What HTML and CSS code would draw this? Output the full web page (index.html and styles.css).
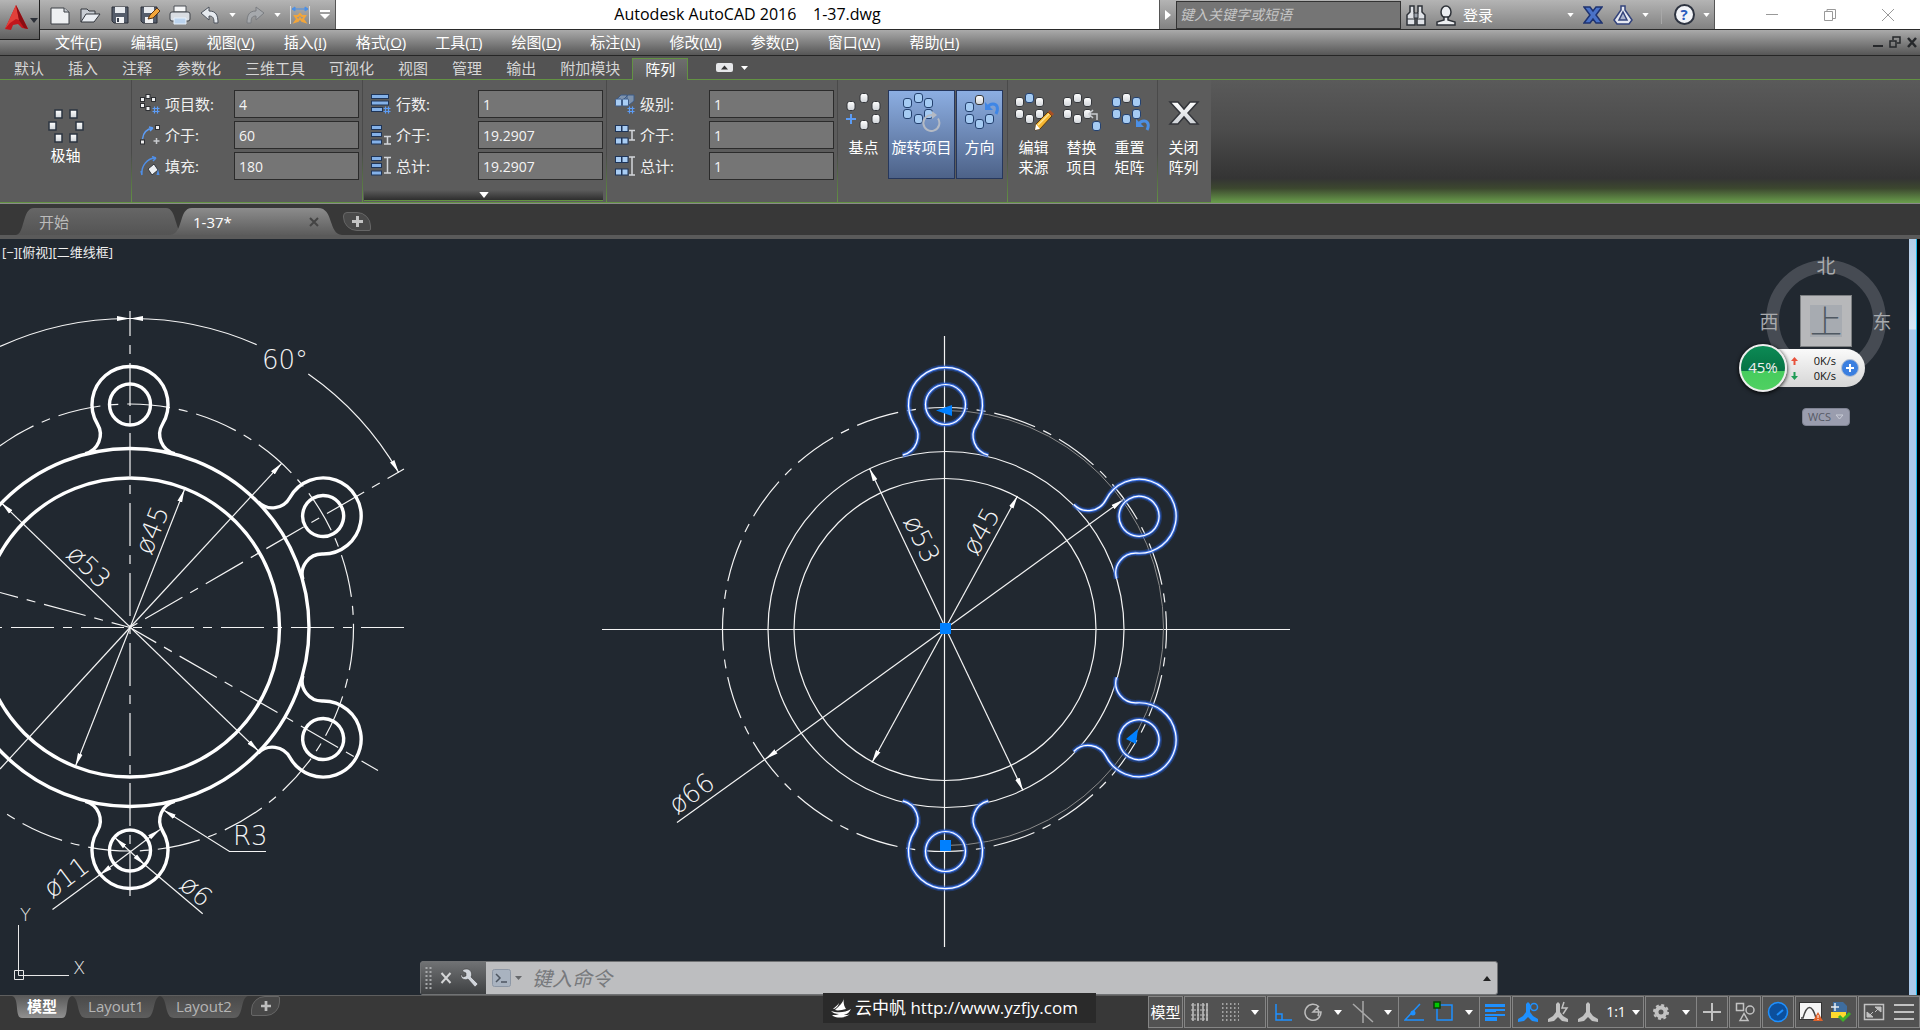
FILE: index.html
```html
<!DOCTYPE html>
<html lang="zh-CN">
  <head>
    <meta charset="UTF-8" />
    <meta name="viewport" content="width=device-width, initial-scale=1.0" />
    <title>Autodesk AutoCAD 2016 1-37.dwg</title>
    <link rel="stylesheet" href="styles.css">
  </head>

  <body>
    <svg class="defs" aria-hidden="true">
      <defs>
        <linearGradient id="white-fill" x1="0" y1="0" x2="0" y2="1">
          <stop offset="0" stop-color="#ffffff" />
          <stop offset="1" stop-color="#cfd3d8" />
        </linearGradient>
        <marker id="arrow" viewBox="0 0 13 6" refX="13" refY="3" markerWidth="13" markerHeight="6" markerUnits="userSpaceOnUse" orient="auto-start-reverse">
          <path d="M0 0.5L13 3L0 5.5z" fill="#fff" />
        </marker>
        <symbol id="i-down" viewBox="0 0 8 5"><path d="M0 0h8L4 5z" fill="currentColor" /></symbol>
        <symbol id="w" viewBox="0 0 9 10" overflow="visible"><rect x="0.5" y="0.5" width="8" height="9" rx="2.5" fill="url(#white-fill)" stroke="#35373b" /></symbol>
        <symbol id="b" viewBox="0 0 9 10" overflow="visible"><rect x="0.5" y="0.5" width="8" height="9" rx="2.5" fill="#a5cbf3" stroke="#24416f" /></symbol>
        <symbol id="i-hash" viewBox="0 0 8 8"><path d="M2.5 0.5v7M5.5 0.5v7M0.5 2.5h7M0.5 5.5h7" stroke="#5c9cf5" stroke-width="1.2" /></symbol>
        <symbol id="person" viewBox="0 0 22 22">
          <path d="M11 1l2 2v8l3 4 5 3v3l-6-1-4-4-4 4-6 1v-3l5-3 3-4V3z" fill="currentColor" />
        </symbol>
        <!-- 凸耳 -->
        <path id="lug-left" d="M-44.700 -173.800A20 20 0 0 0 -32.600 -203.500A38 38 0 1 1 32.600 -203.500A20 20 0 0 0 44.700 -173.800" />
        <path id="lug-right" d="M-42.800 -172.800A20 20 0 0 0 -30.900 -203.200A37 37 0 1 1 30.900 -203.200A20 20 0 0 0 42.800 -172.800M-20 -223.500A20 20 0 1 1 20 -223.500A20 20 0 1 1 -20 -223.500" />
        <g id="lugs-right">
          <use href="#lug-right" />
          <use href="#lug-right" transform="rotate(60)" />
          <use href="#lug-right" transform="rotate(120)" />
          <use href="#lug-right" transform="rotate(180)" />
        </g>
      </defs>
    </svg>

    <!-- 标题栏 -->
    <header class="titlebar">
      <button class="app-button" aria-label="应用程序菜单">
        <svg width="38" height="38" viewBox="0 0 38 38">
          <path d="M15 4L27 28l-6-1-4-4-5 1-2 5-6-1z" fill="#c3161c" />
          <path d="M15 4l3 15-3-1-6 4-5 6z" fill="#e2403a" />
          <path d="M18 19l5 8 4 1-12-24z" fill="#8c0d12" />
          <path d="M29 17h8l-4 5z" fill="#2c3038" />
        </svg>
      </button>
      <div class="quick-access">
        <button aria-label="新建"><svg width="22" height="22" viewBox="0 0 22 22"><path d="M2 4h13l5 4v12H2z" fill="#eef0f2" stroke="#3b3f45" /><path d="M15 4v4h5" fill="#c6cad0" stroke="#3b3f45" /></svg></button>
        <button aria-label="打开"><svg width="22" height="22" viewBox="0 0 22 22"><path d="M2 18V5h6l2 2h6v4" fill="#c8cdd4" stroke="#32363d" /><path d="M2 18l5-8h14l-6 8z" fill="#e9edf2" stroke="#32363d" /></svg></button>
        <button aria-label="保存"><svg width="20" height="20" viewBox="0 0 20 20"><path d="M2 2h16v16H4l-2-2z" fill="#555d6b" stroke="#2b2f38" /><path d="M5 2h10v6H5z" fill="#e7eaee" /><path d="M6 12h8v6H6z" fill="#f3f4f6" /><path d="M7 13h2v4H7z" fill="#39404d" /></svg></button>
        <button aria-label="另存为"><svg width="22" height="20" viewBox="0 0 22 20"><path d="M2 2h16v16H4l-2-2z" fill="#555d6b" stroke="#2b2f38" /><path d="M5 2h10v6H5z" fill="#e7eaee" /><path d="M6 12h8v6H6z" fill="#f3f4f6" /><path d="M9 14l2-4 7-7 3 3-7 7z" fill="#f2a53a" stroke="#5a3414" /></svg></button>
        <button aria-label="打印"><svg width="22" height="20" viewBox="0 0 22 20"><path d="M5 1h12v6H5z" fill="#f6f7f8" stroke="#4a4e55" /><rect x="1" y="7" width="20" height="9" rx="2" fill="#d9dde2" stroke="#3e4249" /><path d="M5 13h12v6H5z" fill="#bcd4ee" stroke="#e8f1fa" /></svg></button>
        <button aria-label="放弃"><svg width="22" height="20" viewBox="0 0 22 20"><path d="M2 8l8-6v4c7 0 9 4 9 12h-4c0-5-1-7-5-7v4z" fill="#e6eaef" stroke="#4d535c" /></svg></button>
        <button class="narrow" aria-label="放弃列表"><svg width="7" height="4"><use href="#i-down" /></svg></button>
        <button aria-label="重做"><svg width="22" height="20" viewBox="0 0 22 20"><path d="M20 8l-8-6v4c-7 0-9 4-9 12h4c0-5 1-7 5-7v4z" fill="#a6a9ad" stroke="#7a7d81" /></svg></button>
        <button class="narrow" aria-label="重做列表"><svg width="7" height="4"><use href="#i-down" /></svg></button>
        <button aria-label="自定义工具"><svg width="22" height="20" viewBox="0 0 22 20"><path d="M1.500 1v18M20.500 1v18" stroke="#d8dadd" /><path d="M3 4h16M3 4l3-2v4zM19 4l-3-2v4z" stroke="#4b8fe6" fill="#4b8fe6" /><path d="M6 17l2-3-2-3 3 0 2-2 2 2 3 0-2 3 2 3-3-1-2-3-2 3z" fill="none" stroke="#f2a53a" stroke-width="2" /></svg></button>
        <button class="narrow" aria-label="自定义快速访问工具栏"><svg width="10" height="10" viewBox="0 0 10 10"><path d="M0 0h10v2H0zM0 4h10L5 9z" fill="#fff" /></svg></button>
      </div>
      <h1 class="title">Autodesk AutoCAD 2016 &nbsp;&nbsp; 1-37.dwg</h1>
      <div class="infocenter">
        <button class="play" aria-label="折叠"><svg width="6" height="10" viewBox="0 0 6 10"><path d="M0 0l6 5-6 5z" fill="#fff" /></svg></button>
        <input class="search" type="text" placeholder="键入关键字或短语" aria-label="键入关键字或短语" />
        <button aria-label="搜索"><svg width="22" height="22" viewBox="0 0 22 22"><path d="M5 2h4v6l1 3v10H2V11l3-3zM17 2h-4v6l-1 3v10h8V11l-3-3z" fill="#dfe2e7" stroke="#2e3238" stroke-width="1.500" /><path d="M9 9h4v5H9zM2 15h8M12 15h8" fill="#9aa1ab" stroke="#2e3238" /></svg></button>
        <button aria-label="用户"><svg width="22" height="22" viewBox="0 0 22 22"><ellipse cx="11" cy="8" rx="5" ry="6" fill="#eceef1" stroke="#2e3238" stroke-width="1.500" /><path d="M9 13h4v3l7 2v3H2v-3l7-2z" fill="#eceef1" stroke="#2e3238" stroke-width="1.500" /></svg></button>
        <button class="sign-in">登录</button>
        <button class="narrow" aria-label="登录列表"><svg width="7" height="4"><use href="#i-down" /></svg></button>
        <button aria-label="Exchange 应用程序"><svg width="20" height="18" viewBox="0 0 20 18"><path d="M1 1h6l3 4 3-4h6l-6 8 6 8h-6l-3-4-3 4H1l6-8z" fill="#4a72c8" stroke="#1f3370" stroke-width="1.500" /></svg></button>
        <button aria-label="A360"><svg width="22" height="22" viewBox="0 0 22 22"><path d="M9 2h4v4l7 10-3 4H5l-3-4 7-10z" fill="#e6e9f2" stroke="#34447c" stroke-width="1.500" /><path d="M11 8l4 8H7z" fill="#a9b2cc" stroke="#34447c" stroke-width="1.500" /></svg></button>
        <button class="narrow" aria-label="A360 列表"><svg width="7" height="4"><use href="#i-down" /></svg></button>
        <span class="divider"></span>
        <button class="help" aria-label="帮助"><span class="help-mark">?</span></button>
        <button class="narrow" aria-label="帮助列表"><svg width="7" height="4"><use href="#i-down" /></svg></button>
      </div>
      <div class="window-buttons">
        <button aria-label="最小化"><svg width="14" height="14" viewBox="0 0 14 14"><path d="M1 6.500h12" stroke="#999" /></svg></button>
        <button aria-label="还原"><svg width="14" height="14" viewBox="0 0 14 14"><path d="M1.500 3.500h8v9h-8zM4 3V1.500h8.500v9H10" fill="none" stroke="#999" /></svg></button>
        <button aria-label="关闭"><svg width="14" height="14" viewBox="0 0 14 14"><path d="M1 1l12 12M13 1L1 13" stroke="#999" /></svg></button>
      </div>
    </header>

    <!-- 菜单栏 -->
    <nav class="menubar">
      <a href="#">文件(<u>F</u>)</a>
      <a href="#">编辑(<u>E</u>)</a>
      <a href="#">视图(<u>V</u>)</a>
      <a href="#">插入(<u>I</u>)</a>
      <a href="#">格式(<u>O</u>)</a>
      <a href="#">工具(<u>T</u>)</a>
      <a href="#">绘图(<u>D</u>)</a>
      <a href="#">标注(<u>N</u>)</a>
      <a href="#">修改(<u>M</u>)</a>
      <a href="#">参数(<u>P</u>)</a>
      <a href="#">窗口(<u>W</u>)</a>
      <a href="#">帮助(<u>H</u>)</a>
      <div class="doc-buttons">
        <button aria-label="最小化图形"><svg width="12" height="12" viewBox="0 0 12 12"><path d="M1 9h10v2H1z" fill="#26282b" /></svg></button>
        <button aria-label="还原图形"><svg width="12" height="12" viewBox="0 0 12 12"><path d="M1 5h6v6H1zM4 4V1h7v6H8" fill="none" stroke="#26282b" stroke-width="1.500" /></svg></button>
        <button aria-label="关闭图形"><svg width="12" height="12" viewBox="0 0 12 12"><path d="M2 2l8 9M10 2l-8 9" stroke="#26282b" stroke-width="2.500" /></svg></button>
      </div>
    </nav>

    <!-- 功能区选项卡 -->
    <nav class="ribbon-tabs">
      <a href="#">默认</a>
      <a href="#">插入</a>
      <a href="#">注释</a>
      <a href="#">参数化</a>
      <a href="#">三维工具</a>
      <a href="#">可视化</a>
      <a href="#">视图</a>
      <a href="#">管理</a>
      <a href="#">输出</a>
      <a href="#">附加模块</a>
      <a class="active" href="#">阵列</a>
      <button class="ribbon-toggle" aria-label="最小化功能区">
        <svg width="32" height="10" viewBox="0 0 32 10"><rect width="17" height="9" rx="2" fill="#e6e7e9" /><path d="M5 6.500h7L8.500 2.500z" fill="#333" /><path d="M25 3h7l-3.500 4z" fill="#fff" /></svg>
      </button>
    </nav>

    <!-- 功能区面板 -->
    <section class="ribbon">
      <div class="panel panel-type">
        <button class="polar">
          <svg width="38" height="36" viewBox="0 0 38 36">
            <g fill="url(#white-fill)" stroke="#2b3440" stroke-width="1.500">
              <rect x="8" y="2" width="7" height="8" /><rect x="23" y="2" width="7" height="8" />
              <rect x="2" y="14" width="7" height="8" /><rect x="29" y="14" width="7" height="8" />
              <rect x="8" y="26" width="7" height="8" /><rect x="23" y="26" width="7" height="8" />
            </g>
          </svg>
          极轴
        </button>
      </div>

      <div class="panel panel-form">
        <div class="form-row">
          <svg width="20" height="20" viewBox="0 0 20 20"><g fill="#eef0f2" stroke="#2d2f33"><rect x="6" y="0.500" width="4" height="4" /><rect x="0.500" y="3.500" width="4" height="4" /><rect x="11.500" y="3.500" width="4" height="4" /><rect x="0.500" y="9.500" width="4" height="4" /><rect x="6" y="12.500" width="4" height="4" /></g><use href="#i-hash" x="12" y="12" width="8" height="8" /></svg>
          <label for="items">项目数:</label>
          <input id="items" type="text" value="4" />
        </div>
        <div class="form-row">
          <svg width="20" height="20" viewBox="0 0 20 20"><path d="M2.500 14C3 8 7 4 13 3M13 3l-4-1M13 3l-3 3" fill="none" stroke="#5c9cf5" stroke-width="1.500" /><rect x="15.500" y="0.500" width="4" height="4" fill="#eee" stroke="#2d2f33" /><rect x="0.500" y="15" width="4" height="4" fill="#eee" stroke="#2d2f33" /><path d="M16.500 13v6M13.500 16h6" stroke="#c9ccd0" stroke-width="1.500" /></svg>
          <label for="items-between">介于:</label>
          <input id="items-between" type="text" value="60" />
        </div>
        <div class="form-row">
          <svg width="20" height="20" viewBox="0 0 20 20"><path d="M2 19C1 10 7 2 16 2M16 2l-4-1.500M16 2l-3 3M2 19l-1-4" fill="none" stroke="#4f8fe8" stroke-width="1.500" /><path d="M8 13l6-5 4 6-6 5z" fill="#edeff2" stroke="#33373d" /><path d="M18 13l1.500 6h-3z" fill="#4f8fe8" /></svg>
          <label for="fill">填充:</label>
          <input id="fill" type="text" value="180" />
        </div>
      </div>

      <div class="panel panel-form panel-rows">
        <div class="form-row">
          <svg width="20" height="20" viewBox="0 0 20 20"><g fill="#84b1e8" stroke="#1f3558"><rect x="0.500" y="0.500" width="17" height="4" /><rect x="0.500" y="7" width="17" height="4" /><rect x="0.500" y="13.500" width="11" height="4" /></g><use href="#i-hash" x="12" y="12" width="8" height="8" /></svg>
          <label for="rows">行数:</label>
          <input id="rows" type="text" value="1" />
        </div>
        <div class="form-row">
          <svg width="20" height="20" viewBox="0 0 20 20"><g fill="#84b1e8" stroke="#1f3558"><rect x="0.500" y="0.500" width="10" height="4" /><rect x="0.500" y="7.500" width="10" height="4" /><rect x="0.500" y="15" width="10" height="4" /></g><path d="M13 11.500h7M13 19h7M16.500 11v8" stroke="#d3d6da" stroke-width="1.500" /></svg>
          <label for="rows-between">介于:</label>
          <input id="rows-between" type="text" value="19.2907" />
        </div>
        <div class="form-row">
          <svg width="20" height="20" viewBox="0 0 20 20"><g fill="#84b1e8" stroke="#1f3558"><rect x="0.500" y="0.500" width="10" height="4" /><rect x="0.500" y="7.500" width="10" height="4" /><rect x="0.500" y="15" width="10" height="4" /></g><path d="M13 1.500h7M13 17h7M16.500 1v16" stroke="#d3d6da" stroke-width="1.500" /></svg>
          <label for="rows-total">总计:</label>
          <input id="rows-total" type="text" value="19.2907" />
        </div>
        <button class="panel-expand" aria-label="展开面板"><svg width="10" height="6" viewBox="0 0 8 5"><use href="#i-down" /></svg></button>
      </div>

      <div class="panel panel-form">
        <div class="form-row">
          <svg width="20" height="20" viewBox="0 0 20 20"><g fill="#a9cdf4" stroke="#3d5a85"><path d="M1 6l5-5h6v6l-5 4M8 6l5-5h6v6l-5 4" fill="#7d92ad" /><rect x="0.500" y="5" width="6" height="7" rx="1" /><rect x="7.500" y="5" width="6" height="7" rx="1" /></g><use href="#i-hash" x="12" y="12" width="8" height="8" /></svg>
          <label for="levels">级别:</label>
          <input id="levels" type="text" value="1" />
        </div>
        <div class="form-row">
          <svg width="20" height="20" viewBox="0 0 20 20"><g fill="#a9cdf4" stroke="#1f3558"><rect x="0.500" y="0.500" width="6" height="6" /><rect x="7" y="0.500" width="6" height="6" /><rect x="0.500" y="13" width="6" height="6" /><rect x="7" y="13" width="6" height="6" /></g><path d="M14 5.500h6M14 15h6M17 5v10" stroke="#d3d6da" stroke-width="1.500" /></svg>
          <label for="levels-between">介于:</label>
          <input id="levels-between" type="text" value="1" />
        </div>
        <div class="form-row">
          <svg width="20" height="20" viewBox="0 0 20 20"><g fill="#a9cdf4" stroke="#1f3558"><rect x="0.500" y="0.500" width="6" height="6" /><rect x="7" y="0.500" width="6" height="6" /><rect x="0.500" y="13" width="6" height="6" /><rect x="7" y="13" width="6" height="6" /></g><path d="M14 1h6M14 19h6M17 1v18" stroke="#d3d6da" stroke-width="1.500" /></svg>
          <label for="levels-total">总计:</label>
          <input id="levels-total" type="text" value="1" />
        </div>
      </div>

      <div class="panel panel-buttons">
        <button class="tool">
          <svg width="40" height="40" viewBox="0 0 40 40">
            <g><use href="#w" x="15" y="1" width="10" height="10" /><use href="#w" x="27" y="9" width="10" height="10" /><use href="#w" x="27" y="22" width="10" height="10" /><use href="#w" x="15" y="28" width="10" height="10" /><use href="#w" x="2" y="9" width="10" height="10" /></g>
            <path d="M7 22v10M2 27h10" stroke="#5c9cf5" stroke-width="2" />
          </svg>
          <span>基点</span>
        </button>
        <button class="tool wide pressed">
          <svg width="40" height="40" viewBox="0 0 40 40">
            <g><use href="#b" x="12" y="1" width="9" height="10" /><use href="#b" x="22" y="6" width="9" height="10" /><use href="#b" x="22" y="17" width="9" height="10" /><use href="#b" x="12" y="22" width="9" height="10" /><use href="#b" x="1" y="17" width="9" height="10" /><use href="#b" x="1" y="6" width="9" height="10" /></g>
            <path d="M36 26.500a8 8 0 1 1-6-3.500" fill="none" stroke="#b4bac4" stroke-width="2" /><path d="M30 19l5 4-5 4z" fill="#b4bac4" />
          </svg>
          <span>旋转项目</span>
        </button>
        <button class="tool pressed">
          <svg width="40" height="40" viewBox="0 0 40 40">
            <g><use href="#w" x="15" y="3" width="9" height="10" /><use href="#b" x="5" y="10" width="9" height="10" /><use href="#b" x="5" y="22" width="9" height="10" /><use href="#b" x="15" y="27" width="9" height="10" /><use href="#b" x="25" y="22" width="9" height="10" /></g>
            <path d="M36 22c3-6 1-10-3-10-2 0-4 1-5 3" fill="none" stroke="#3f86e6" stroke-width="3" /><path d="M25 10v8h8z" fill="#3f86e6" />
          </svg>
          <span>方向</span>
        </button>
      </div>

      <div class="panel panel-buttons panel-edit">
        <button class="tool">
          <svg width="40" height="40" viewBox="0 0 40 40">
            <g><use href="#b" x="11" y="1" width="9" height="10" /><use href="#w" x="21" y="5" width="9" height="10" /><use href="#w" x="21" y="17" width="9" height="10" /><use href="#w" x="11" y="22" width="9" height="10" /><use href="#w" x="1" y="17" width="9" height="10" /><use href="#w" x="1" y="5" width="9" height="10" /></g>
            <path d="M21 38l1-6 12-12 4 4-12 13z" fill="#f7b731" stroke="#5a3a10" /><path d="M34 20l2-2 4 4-2 2z" fill="#a84f24" /><path d="M21 38l1-6 4 5z" fill="#fff" /><path d="M24 33l11-11" stroke="#ffe695" stroke-width="1.500" />
          </svg>
          <span>编辑<br />来源</span>
        </button>
        <button class="tool">
          <svg width="40" height="40" viewBox="0 0 40 40">
            <g><use href="#w" x="11" y="1" width="9" height="10" /><use href="#w" x="21" y="5" width="9" height="10" /><use href="#w" x="21" y="17" width="9" height="10" /><use href="#w" x="11" y="22" width="9" height="10" /><use href="#w" x="1" y="17" width="9" height="10" /><use href="#w" x="1" y="5" width="9" height="10" /><use href="#b" x="30" y="29" width="9" height="10" /></g>
            <path d="M35 28v-6h-7M31 18l-4 4 4 4" fill="none" stroke="#c9ccd0" stroke-width="1.500" />
          </svg>
          <span>替换<br />项目</span>
        </button>
        <button class="tool">
          <svg width="40" height="40" viewBox="0 0 40 40">
            <g><use href="#w" x="12" y="1" width="9" height="10" /><use href="#b" x="22" y="5" width="9" height="10" /><use href="#b" x="22" y="17" width="9" height="10" /><use href="#b" x="12" y="22" width="9" height="10" /><use href="#b" x="2" y="17" width="9" height="10" /><use href="#b" x="2" y="5" width="9" height="10" /></g>
            <path d="M37 38c3-6 0-9-3-9-2 0-4 1-5 3" fill="none" stroke="#4b8fe6" stroke-width="3" /><path d="M26 27v8h8z" fill="#4b8fe6" />
          </svg>
          <span>重置<br />矩阵</span>
        </button>
      </div>

      <div class="panel panel-buttons panel-close">
        <button class="tool">
          <svg width="40" height="40" viewBox="0 0 40 40"><path d="M6 10h8l6 7 6-7h8L24 21l10 11h-8l-6-7-6 7H6l10-11z" fill="url(#white-fill)" stroke="#33353a" stroke-width="1.500" /></svg>
          <span>关闭<br />阵列</span>
        </button>
      </div>
    </section>

    <!-- 文件选项卡 -->
    <nav class="file-tabs">
      <a class="file-tab start" href="#">开始</a>
      <a class="file-tab current" href="#">1-37*
        <svg width="10" height="10" viewBox="0 0 10 10"><path d="M1 1l8 8M9 1L1 9" stroke="#444" stroke-width="2" /></svg>
      </a>
      <button class="new-tab" aria-label="新图形"><svg width="11" height="11" viewBox="0 0 11 11"><path d="M4 0h3v4h4v3H7v4H4V7H0V4h4z" fill="#c4c4c4" /></svg></button>
    </nav>

    <!-- 绘图区 -->
    <main class="workspace">
      <svg class="drawing" viewBox="0 239 1909 756" preserveAspectRatio="xMinYMin meet">
        <!-- 左侧参考图 -->
        <g class="thin">
          <path class="center-line" d="M404 627.500H0" />
          <path class="center-line" d="M130 311V898" stroke-dashoffset="18" />
          <path class="center-line" d="M404 469L130 627.500M378 770.500L130 627.500M130 627.500L0 592.500" stroke-dashoffset="24" />
          <circle class="center-line" cx="130" cy="627.500" r="223.500" />
          <path d="M0 346.500A309 309 0 0 1 130 318.500" marker-end="url(#arrow)" />
          <path d="M130 318.500A309 309 0 0 1 256.700 344.700" marker-start="url(#arrow)" />
          <path d="M308.300 374A309 309 0 0 1 398.700 472.500" marker-end="url(#arrow)" />
          <path d="M130 627.500L281.700 463.300" marker-end="url(#arrow)" />
          <path d="M130 627.500L0 769" />
          <path d="M1.500 503L258.500 751" marker-start="url(#arrow)" marker-end="url(#arrow)" />
          <path d="M184.500 489.500L75.500 766" marker-start="url(#arrow)" marker-end="url(#arrow)" />
          <path d="M160 829.500L99.500 875" marker-start="url(#arrow)" marker-end="url(#arrow)" />
          <path d="M99.500 875L52.500 909.500" />
          <path d="M115 837.700L145 865" marker-start="url(#arrow)" marker-end="url(#arrow)" />
          <path d="M145 865L202.700 913.700" />
          <path d="M163.500 810L229.500 851.500H266" marker-start="url(#arrow)" />
        </g>
        <g class="thick" transform="translate(130 627.500)">
          <circle r="149.500" />
          <circle r="179" />
          <g><use href="#lug-left" /><circle cy="-223" r="20.500" /></g>
          <g transform="rotate(60)"><use href="#lug-left" /><circle cy="-223" r="20.500" /></g>
          <g transform="rotate(120)"><use href="#lug-left" /><circle cy="-223" r="20.500" /></g>
          <g transform="rotate(180)"><use href="#lug-left" /><circle cy="-223" r="20.500" /></g>
        </g>
        <g class="dim-text">
          <text x="262" y="369">60°</text>
          <text transform="translate(65 556) rotate(44)">ø53</text>
          <text transform="translate(151 556) rotate(-68)">ø45</text>
          <text transform="translate(52 899) rotate(-37)">ø11</text>
          <text transform="translate(178 887) rotate(41)">ø6</text>
          <text x="233" y="845">R3</text>
        </g>
        <!-- 坐标系图标 -->
        <g class="ucs">
          <path d="M14.500 970.500h9v9h-9zM18.500 975.500V925M18.500 975.500H69" />
          <text x="20" y="921">Y</text>
          <text x="73" y="974">X</text>
        </g>
        <!-- 右侧图形 -->
        <g class="thin">
          <path d="M602 629.500H1290M944.500 336V947" />
          <circle cx="945" cy="629.500" r="151" />
          <circle cx="946" cy="629.500" r="178" />
          <circle class="center-line" cx="944.500" cy="629.500" r="222" stroke-dashoffset="24" />
          <path d="M869.500 468.500L1023 790.500" marker-start="url(#arrow)" marker-end="url(#arrow)" />
          <path d="M1017.500 496L872 762.500" marker-start="url(#arrow)" marker-end="url(#arrow)" />
          <path d="M1123.500 499.500L765.500 759" marker-start="url(#arrow)" marker-end="url(#arrow)" />
          <path d="M765.500 759L677 822.500" />
        </g>
        <path class="array-path" d="M946 410.500A217.500 217.500 0 0 1 946 845.500" />
        <g transform="translate(945.500 628)">
          <use class="glow-outer" href="#lugs-right" />
          <use class="glow" href="#lugs-right" />
          <use class="selected" href="#lugs-right" />
        </g>
        <g class="dim-text">
          <text transform="translate(903 521) rotate(64)">ø53</text>
          <text transform="translate(977 557) rotate(-61)">ø45</text>
          <text transform="translate(677 815) rotate(-36)">ø66</text>
        </g>
        <g class="grip">
          <rect x="940" y="623" width="11" height="11" />
          <rect x="940" y="840" width="11" height="11" />
          <path d="M936 410.500L952 405v11zM1126 739l12-10-2 15z" />
        </g>
      </svg>

      <p class="view-label">[−][俯视][二维线框]</p>

      <!-- ViewCube -->
      <svg class="view-cube" width="140" height="130" viewBox="1756 250 140 130">
        <circle cx="1826" cy="320" r="53.500" fill="none" stroke="#464b53" stroke-width="13" />
        <rect x="1800.500" y="295.500" width="51" height="51" fill="#b7b8ba" stroke="#7d8082" />
        <rect x="1810" y="305" width="32" height="32" fill="#a7abb1" />
        <g class="cube-text">
          <text x="1826" y="273">北</text>
          <text x="1769" y="329">西</text>
          <text x="1882" y="329">东</text>
          <text class="cube-face" x="1826" y="333">上</text>
        </g>
      </svg>

      <div class="net-widget">
        <div class="net-ball">45%</div>
        <div class="net-speeds">
          <p><svg width="7" height="8" viewBox="0 0 7 8"><path d="M3.500 0L7 4H4.500v4h-2V4H0z" fill="#e8523c" /></svg><span>0K/s</span></p>
          <p><svg width="7" height="8" viewBox="0 0 7 8"><path d="M3.500 8L7 4H4.500V0h-2v4H0z" fill="#1f9c55" /></svg><span>0K/s</span></p>
        </div>
        <button class="net-plus" aria-label="加速"><svg width="10" height="10" viewBox="0 0 10 10"><path d="M5 1v8M1 5h8" stroke="#fff" stroke-width="2" /></svg></button>
      </div>

      <button class="wcs">WCS<svg width="9" height="6" viewBox="0 0 9 6"><path d="M1 1h7L4.500 5z" fill="none" stroke="#c9ccd6" /></svg></button>

      <div class="command-bar">
        <div class="command-grip">
          <svg width="7" height="24" viewBox="0 0 7 24"><path d="M1.500 1v22M5.500 1v22" stroke="#a5a7a9" stroke-width="2" stroke-dasharray="2 2" /></svg>
          <button aria-label="关闭命令行"><svg width="12" height="12" viewBox="0 0 12 12"><path d="M1.500 1l9 10M10.500 1l-9 10" stroke="#d4d5d6" stroke-width="2" /></svg></button>
          <button aria-label="自定义"><svg width="20" height="20" viewBox="0 0 20 20"><path d="M7 1a5 5 0 0 0-5 2l4 2v3L3 9 1 6c-1 4 3 7 7 5l7 8 3-3-7-7c2-4-1-8-4-8z" fill="#d0d4da" stroke="#333" stroke-width="0.500" /></svg></button>
        </div>
        <button class="command-history" aria-label="最近使用的命令">
          <svg width="32" height="20" viewBox="0 0 32 20"><rect x="0.500" y="1.500" width="18" height="17" rx="2" fill="#a9b3c0" stroke="#8d97a5" /><path d="M4 6l4 4-4 4M9 14h6" fill="none" stroke="#4d5560" stroke-width="1.500" /><path d="M23 8h7l-3.500 4z" fill="#66686b" /></svg>
        </button>
        <input class="command-input" type="text" placeholder="键入命令" aria-label="键入命令" />
        <button class="command-up" aria-label="展开历史"><svg width="8" height="5" viewBox="0 0 8 5"><path d="M0 5h8L4 0z" fill="#222" /></svg></button>
      </div>

      <div class="edge-strip"></div>
    </main>

    <!-- 状态栏 -->
    <footer class="statusbar">
      <nav class="layout-tabs">
        <a class="layout-tab current" href="#">模型</a>
        <a class="layout-tab" href="#">Layout1</a>
        <a class="layout-tab" href="#">Layout2</a>
        <button class="layout-add" aria-label="新建布局"><svg width="10" height="10" viewBox="0 0 11 11"><path d="M4 0h3v4h4v3H7v4H4V7H0V4h4z" fill="#bdbdbd" /></svg></button>
      </nav>

      <div class="status-tools">
        <div class="cell"><button class="model-button">模型</button></div>
        <div class="cell">
          <button aria-label="栅格"><svg width="20" height="20" viewBox="0 0 20 20"><path d="M3 1v18M8 1v18M13 1v18M17 1v18" stroke="#c2c2c2" stroke-width="1.500" /><path d="M1 3h18M1 8h18M1 13h18M1 17h18" stroke="#c2c2c2" stroke-dasharray="2 1" /></svg></button>
          <button aria-label="捕捉"><svg width="20" height="20" viewBox="0 0 20 20"><path d="M2 2h17M2 6h17M2 10h17M2 14h17M2 18h17" stroke="#bdbdbd" stroke-width="1.500" stroke-dasharray="1.500 2.500" /></svg></button>
          <button class="narrow" aria-label="捕捉设置"><svg width="8" height="5"><use href="#i-down" /></svg></button>
        </div>
        <div class="cell">
          <button class="on" aria-label="正交"><svg width="20" height="20" viewBox="0 0 20 20"><path d="M3 2v16h16M3 12h6v6" fill="none" stroke="currentColor" stroke-width="1.500" /></svg></button>
          <button aria-label="极轴追踪"><svg width="20" height="20" viewBox="0 0 20 20"><path d="M16 5a8 8 0 1 0 2 5H10l6-6M14 6c2 2 2 5 1 8" fill="none" stroke="#bdbdbd" stroke-width="1.500" /></svg></button>
          <button class="narrow" aria-label="极轴设置"><svg width="8" height="5"><use href="#i-down" /></svg></button>
          <button aria-label="等轴测"><svg width="22" height="24" viewBox="0 0 22 24"><path d="M1 4l20 18M11 1v22" stroke="#a8a8a8" stroke-width="1.500" /></svg></button>
          <button class="narrow" aria-label="等轴测设置"><svg width="8" height="5"><use href="#i-down" /></svg></button>
        </div>
        <div class="cell joined">
          <button class="on" aria-label="对象捕捉追踪"><svg width="20" height="20" viewBox="0 0 20 20"><path d="M16 2L1 18h19" fill="none" stroke="currentColor" stroke-width="1.500" /><circle cx="9" cy="11" r="2.500" fill="currentColor" /></svg></button>
          <button class="on" aria-label="对象捕捉"><svg width="22" height="22" viewBox="0 0 22 22"><path d="M4 4h15v15H4z" fill="none" stroke="currentColor" stroke-width="1.500" /><rect x="1" y="1" width="6" height="6" fill="#00c800" stroke="#064006" stroke-width="1.500" /></svg></button>
          <button class="narrow" aria-label="对象捕捉设置"><svg width="8" height="5"><use href="#i-down" /></svg></button>
        </div>
        <div class="cell joined"><button class="on" aria-label="线宽"><svg width="20" height="18" viewBox="0 0 20 18"><path d="M0 1h20v3H0zM0 6h11v3H0zM11 6h9v2h-9zM0 11h20v2H0zM0 14h12v4H0z" fill="currentColor" /></svg></button></div>
        <div class="cell">
          <button class="on" aria-label="注释可见性"><svg width="22" height="22"><use href="#person" /><circle cx="17" cy="6" r="3.500" fill="none" stroke="currentColor" stroke-width="1.500" /></svg></button>
          <button class="off" aria-label="自动缩放"><svg width="22" height="22"><use href="#person" /><path d="M17 1l-2 6h5l-4 6" fill="none" stroke="currentColor" stroke-width="1.500" /></svg></button>
          <button class="off" aria-label="注释"><svg width="22" height="22"><use href="#person" /></svg></button>
          <button class="scale">1:1<svg width="8" height="5"><use href="#i-down" /></svg></button>
        </div>
        <div class="cell">
          <button class="off" aria-label="切换工作空间"><svg width="18" height="18" viewBox="0 0 18 18"><circle cx="9" cy="9" r="7" fill="none" stroke="currentColor" stroke-width="2" stroke-dasharray="3 2.500" /><circle cx="9" cy="9" r="4.500" fill="none" stroke="currentColor" stroke-width="4" /></svg></button>
          <button class="narrow" aria-label="工作空间列表"><svg width="8" height="5"><use href="#i-down" /></svg></button>
        </div>
        <div class="cell joined"><button class="off" aria-label="注释监视器"><svg width="18" height="18" viewBox="0 0 18 18"><path d="M9 0v18M0 9h18" stroke="currentColor" stroke-width="2" /></svg></button></div>
        <div class="cell"><button class="off" aria-label="隔离对象"><svg width="20" height="20" viewBox="0 0 20 20"><path d="M1.500 1.500h7v7h-7zM5 18.500l4-7 4 7z" fill="none" stroke="currentColor" stroke-width="1.500" /><circle cx="15" cy="8" r="4" fill="none" stroke="currentColor" stroke-width="1.500" /></svg></button></div>
        <div class="cell"><button class="on" aria-label="硬件加速"><svg width="22" height="22" viewBox="0 0 22 22"><circle cx="11" cy="11" r="9.500" fill="#0c4f9c" stroke="currentColor" stroke-width="1.500" /><path d="M10 14l6-5" stroke="currentColor" stroke-width="2" /></svg></button></div>
        <div class="cell">
          <button aria-label="性能警告"><svg width="24" height="22" viewBox="0 0 24 22"><rect x="0.500" y="1.500" width="22" height="17" fill="#f4f4f4" stroke="#333" /><path d="M2 17h2c4-14 9-14 13 0" fill="none" stroke="#444" stroke-width="1.500" /><path d="M19 11l5 9H14z" fill="#e0622a" /><path d="M19 14v3M19 18v1" stroke="#fff" /></svg></button>
          <button aria-label="图形通知"><svg width="22" height="22" viewBox="0 0 22 22"><path d="M3 1h10l4 4v7H3z" fill="#3e6d9f" /><path d="M1 6h8M5 2v8" stroke="#e8edf3" stroke-width="1.500" /><path d="M1 11h15v6H1z" fill="#ffd92e" /><path d="M9 15l4 4 7-7" fill="none" stroke="#3fae2a" stroke-width="3" /></svg></button>
        </div>
        <div class="cell">
          <button class="off" aria-label="全屏显示"><svg width="22" height="18" viewBox="0 0 22 18"><path d="M1.500 1.500h19v15h-19z" fill="none" stroke="currentColor" stroke-width="1.500" /><path d="M12 4h6v5zM4 9v5h6zM15 6l-3 3M7 12l3-3" fill="currentColor" stroke="currentColor" /></svg></button>
          <button class="off" aria-label="自定义"><svg width="20" height="18" viewBox="0 0 20 18"><path d="M0 2h20M0 9h20M0 16h20" stroke="currentColor" stroke-width="2" /></svg></button>
        </div>
      </div>

      <a class="watermark" href="http://www.yzfjy.com">
        <svg width="22" height="20" viewBox="0 0 22 20"><path d="M14 0c-1 5-5 8-9 12 3 1 7 0 11-1-2-3-3-7-2-11zM1 13c6 2 14 2 20-2-2 4-4 5-7 6 3 0 5 0 6-1-4 4-14 5-18 1 3 0 5 0 7-1-4 0-6-1-8-3z" fill="#fff" /><path d="M9 5c-1 2-4 4-6 6 2 0 5-2 6-6z" fill="#fff" /></svg>
        云中帆 http://www.yzfjy.com
      </a>
    </footer>
  </body>
</html>
```
FILE: styles.css
```css
* {
  box-sizing: border-box;
}

body {
  display: flex;
  flex-direction: column;
  height: 100vh;
  margin: 0;
  overflow: hidden;
  background-color: #383838;
  color: #f0f0f0;
  font-family: "Open Sans", "Noto Sans CJK SC", sans-serif;
  font-size: 15px;
  line-height: 20px;
}

h1,
p {
  margin: 0;
}

a {
  color: inherit;
  text-decoration: none;
}

button {
  display: flex;
  align-items: center;
  justify-content: center;
  margin: 0;
  padding: 0;
  border: none;
  background: none;
  color: #fff;
  font: inherit;
}

input {
  font: inherit;
}

svg {
  display: block;
  flex: none;
}

.defs {
  position: absolute;
  width: 0;
  height: 0;
}

/* 标题栏 */
.titlebar {
  display: flex;
  flex: none;
  height: 30px;
  border-bottom: 1px solid #2a2a2a;
  background-color: #fff;
}

.app-button {
  position: relative;
  z-index: 2;
  flex: none;
  width: 40px;
  height: 40px;
  border: 1px solid #1e1e1e;
  border-width: 0 1px 1px 0;
  background: linear-gradient(#b5b5b5, #606060);
}

.quick-access,
.infocenter {
  display: flex;
  flex: none;
  align-items: center;
  background: linear-gradient(#b4b4b4, #828282);
}

.quick-access {
  padding-left: 5px;
  border-right: 1px solid #555;
}

.quick-access button,
.infocenter button {
  width: 30px;
}

.quick-access .narrow,
.infocenter .narrow {
  width: 15px;
}

.quick-access .narrow:last-child {
  width: 20px;
}

.title {
  flex: 1;
  color: #000;
  font-size: 16px;
  font-weight: 400;
  line-height: 28px;
  text-align: center;
}

.infocenter {
  border-right: 1px solid #555;
  border-left: 1px solid #555;
}

.infocenter .play {
  width: 16px;
}

.search {
  width: 225px;
  height: 28px;
  padding: 0 3px;
  border: 1px solid #333;
  background-color: #757575;
  color: #ddd;
  font-size: 14px;
  font-style: italic;
}

.search::placeholder {
  color: #c6c6c6;
}

.infocenter .sign-in {
  justify-content: flex-start;
  width: 102px;
  padding-left: 2px;
}

.divider {
  width: 1px;
  height: 18px;
  margin: 0 7px 0 8px;
  background-color: #a8a8a8;
}

.help-mark {
  width: 21px;
  height: 21px;
  border: 2px solid #2d3340;
  border-radius: 50%;
  background-color: #f2f4f8;
  color: #2a5bbd;
  font-weight: 700;
  line-height: 17px;
}

.window-buttons {
  display: flex;
  margin: 0 3px 0 28px;
}

.window-buttons button {
  width: 58px;
}

/* 菜单栏 */
.menubar {
  display: flex;
  flex: none;
  align-items: center;
  gap: 29px;
  height: 26px;
  padding: 0 2px 2px 55px;
  border-bottom: 1px solid #262626;
  background: linear-gradient(#aaa, #565656);
  color: #fff;
}

.doc-buttons {
  display: flex;
  gap: 5px;
  margin-left: auto;
}

/* 功能区选项卡 */
.ribbon-tabs {
  display: flex;
  flex: none;
  align-items: flex-end;
  height: 24px;
  padding-left: 2px;
  border-bottom: 1px solid #639243;
  background-color: #535353;
  color: #d6d6d6;
}

.ribbon-tabs a {
  padding: 0 12px 1px;
}

.ribbon-tabs .active {
  margin-bottom: -1px;
  border: 1px solid #639243;
  border-bottom: none;
  background: linear-gradient(#6e6e6e, #5c5c5c);
  color: #fff;
}

.ribbon-toggle {
  margin: 0 0 6px 28px;
}

/* 功能区 */
.ribbon {
  display: flex;
  flex: none;
  height: 124px;
  border-bottom: 1px solid #8a8a8a;
  background: linear-gradient(#5a5a5a 0%, #4c4c4c 40%, #343434 80%, #3c472f 88%, #6a9f4c 100%);
}

.panel {
  border-right: 1px solid #639243;
  border-bottom: 1px solid #639243;
  border-image: linear-gradient(#4a4a4a 60%, #639243) 1;
  background-color: #5c5c5c;
}

.panel-type {
  display: flex;
  justify-content: center;
  width: 132px;
  padding: 28px 0 0;
}

.polar {
  flex-direction: column;
  align-self: flex-start;
  gap: 1px;
}

.panel-form {
  display: flex;
  flex-direction: column;
  gap: 3px;
  padding: 10px 3px 0 8px;
}

.form-row {
  display: grid;
  grid-template-columns: 25px 69px 125px;
  align-items: center;
}

.form-row input {
  width: 100%;
  height: 28px;
  padding: 0 4px;
  border: 1px solid #2b2b2b;
  background-color: #757575;
  color: #f4f4f4;
  font-size: 14px;
}

.panel-rows .form-row {
  grid-template-columns: 25px 82px 125px;
}

.panel-expand {
  align-self: stretch;
  height: 11px;
  margin: auto 0 1px -7px;
  border-bottom: 1px solid #639243;
  background: linear-gradient(#5c5c5c, #2e2e2e);
}

.panel-buttons {
  display: flex;
  align-items: flex-start;
  gap: 1px;
  padding: 10px 4px 0 2px;
}

.tool {
  flex-direction: column;
  justify-content: flex-start;
  gap: 5px;
  width: 47px;
  height: 89px;
  padding-top: 1px;
  border: 1px solid transparent;
  white-space: nowrap;
}

.tool.wide {
  width: 67px;
}

.tool.pressed {
  border-color: #26375c;
  background: linear-gradient(#8caee2, #4d6288);
}

.panel-close {
  border-right: none;
}

/* 文件选项卡 */
.file-tabs {
  display: flex;
  flex: none;
  align-items: flex-end;
  height: 35px;
  padding-left: 16px;
  border-bottom: 4px solid #5a5a5a;
}

.file-tab {
  display: flex;
  align-items: center;
  justify-content: space-between;
  height: 27px;
  padding: 0 23px;
}

.file-tab.start {
  width: 168px;
  background: linear-gradient(#666, #545454);
  color: #bbb;
  clip-path: path("M0 27C9 26 6 0 18 0H150C161 0 159 26 168 27z");
}

.file-tab.current {
  width: 172px;
  margin-left: -14px;
  background: linear-gradient(#8c8c8c, #5c5c5c);
  color: #fff;
  clip-path: path("M0 27C14 26 8 0 22 0H148C164 0 158 26 172 27z");
}

.new-tab {
  width: 28px;
  height: 19px;
  margin: 0 0 4px 1px;
  border: 1px solid #666;
  border-radius: 4px 14px 2px 14px;
  background-color: #4a4a4a;
}

/* 绘图区 */
.workspace {
  position: relative;
  display: flex;
  flex: 1;
  min-height: 0;
  background-color: #212830;
}

.drawing {
  flex: 1;
  min-width: 0;
  height: 100%;
}

.thin {
  fill: none;
  stroke: #f4f4f4;
  stroke-width: 1.2;
}

.thick {
  fill: none;
  stroke: #fff;
  stroke-width: 3.4;
}

.center-line {
  stroke-dasharray: 43 9 9 9;
}

.array-path {
  fill: none;
  stroke: #8a8a8a;
}

.glow-outer {
  fill: none;
  stroke: #2458c8;
  stroke-opacity: 0.4;
  stroke-width: 6;
}

.glow {
  fill: none;
  stroke: #3a70e6;
  stroke-width: 3;
}

.selected {
  fill: none;
  stroke: #fff;
  stroke-width: 1.2;
}

.grip {
  fill: #0080ff;
}

.dim-text {
  fill: #f4f4f4;
  font-family: "DejaVu Sans", sans-serif;
  font-size: 26px;
  font-weight: 200;
}

.ucs {
  fill: none;
  stroke: #e8e8e8;
}

.ucs text {
  fill: #e8e8e8;
  stroke: none;
  font-family: "DejaVu Sans", sans-serif;
  font-size: 18px;
  font-weight: 200;
}

.view-label {
  position: absolute;
  top: 3px;
  left: 2px;
  font-size: 13px;
}

.edge-strip {
  width: 11px;
  border-right: 3px solid #000;
  background: linear-gradient(#b4cde8, #d8e5f3 90px, #abc9e9 91px);
  box-shadow: inset -1px 0 #19b9e8;
}

.view-cube {
  position: absolute;
  top: 11px;
  right: 24px;
}

.cube-text {
  fill: #a9abae;
  font-size: 19px;
  text-anchor: middle;
}

.cube-face {
  fill: #4f5862;
  font-size: 32px;
  font-weight: 300;
}

.net-widget {
  position: absolute;
  top: 105px;
  right: 55px;
  display: flex;
  align-items: center;
}

.net-ball {
  z-index: 1;
  width: 48px;
  height: 48px;
  border: 2px solid #eee;
  border-radius: 50%;
  background: linear-gradient(#0c8a55, #067344 56%, #46cc5d 56%, #4fd062);
  box-shadow: 0 1px 4px #000;
  font-size: 15px;
  line-height: 42px;
  text-align: center;
}

.net-speeds {
  width: 102px;
  height: 38px;
  margin-left: -24px;
  padding: 4px 29px 0 28px;
  border-radius: 0 19px 19px 0;
  background: linear-gradient(#fafafa, #d6d6d6);
  color: #111;
  font-size: 11px;
  line-height: 15px;
}

.net-speeds p {
  display: flex;
  align-items: center;
  justify-content: space-between;
}

.net-plus {
  width: 18px;
  height: 18px;
  margin: 0 6px 0 -24px;
  border: 1px solid #b9c3d2;
  border-radius: 50%;
  background-color: #3b7fe0;
}

.wcs {
  position: absolute;
  top: 169px;
  right: 70px;
  gap: 4px;
  width: 48px;
  height: 18px;
  border: 1px solid #7f8392;
  border-radius: 4px;
  background-color: #9a9dae;
  color: #565a66;
  font-size: 11px;
}

/* 命令行 */
.command-bar {
  position: absolute;
  right: 422px;
  bottom: 0;
  left: 420px;
  display: flex;
  align-items: center;
  height: 34px;
  border: 1px solid #707274;
  border-radius: 3px;
  background-color: #bdbec0;
}

.command-grip {
  display: flex;
  align-items: center;
  gap: 8px;
  height: 100%;
  padding: 0 6px 0 4px;
  background: linear-gradient(#707274, #3e4042);
}

.command-history {
  margin-left: 6px;
}

.command-input {
  flex: 1;
  min-width: 0;
  padding: 0 8px;
  border: none;
  background: none;
  font-size: 20px;
  font-style: italic;
}

.command-input::placeholder {
  color: #77797c;
}

.command-up {
  margin-right: 6px;
}

/* 状态栏 */
.statusbar {
  position: relative;
  display: flex;
  flex: none;
  justify-content: space-between;
  height: 35px;
  border-top: 1px solid #5e5e5e;
}

.layout-tabs {
  display: flex;
  align-items: flex-start;
  padding-left: 12px;
}

.layout-tab {
  width: 88px;
  height: 22px;
  background: linear-gradient(#4a4a4a, #5e5e5e);
  color: #b5b5b5;
  line-height: 21px;
  text-align: center;
  clip-path: path("M0 0C8 2 4 22 14 22H74C84 22 80 2 88 0z");
}

.layout-tab.current {
  width: 60px;
  background: linear-gradient(#5a5a5a, #909090);
  color: #fff;
  font-weight: 700;
  clip-path: path("M0 0C8 2 2 22 10 22H50C58 22 52 2 60 0z");
}

.layout-add {
  width: 29px;
  height: 20px;
  margin-left: 3px;
  border: 1px solid #666;
  border-radius: 14px 2px 14px 2px;
  background-color: #484848;
}

.status-tools {
  display: flex;
  align-items: flex-start;
  gap: 1px;
  height: 34px;
  background-color: #4c4c4c;
}

.cell {
  display: flex;
  align-items: stretch;
  height: 32px;
  border: 1px solid #858585;
  background-color: #525252;
}

.cell.joined {
  margin-left: -2px;
}

.cell button {
  width: 30px;
}

.cell .narrow {
  width: 20px;
}

.cell .model-button {
  width: 33px;
  white-space: nowrap;
}

.cell .scale {
  gap: 6px;
  width: 40px;
  font-size: 14px;
}

.cell .on {
  color: #1e90ff;
}

.cell .off {
  color: #c2c2c2;
}

.watermark {
  position: absolute;
  bottom: 7px;
  left: 823px;
  display: flex;
  align-items: center;
  gap: 3px;
  width: 273px;
  height: 30px;
  padding-left: 7px;
  background-color: #2a2a2a;
  color: #fff;
  font-size: 17px;
  white-space: nowrap;
}
```
